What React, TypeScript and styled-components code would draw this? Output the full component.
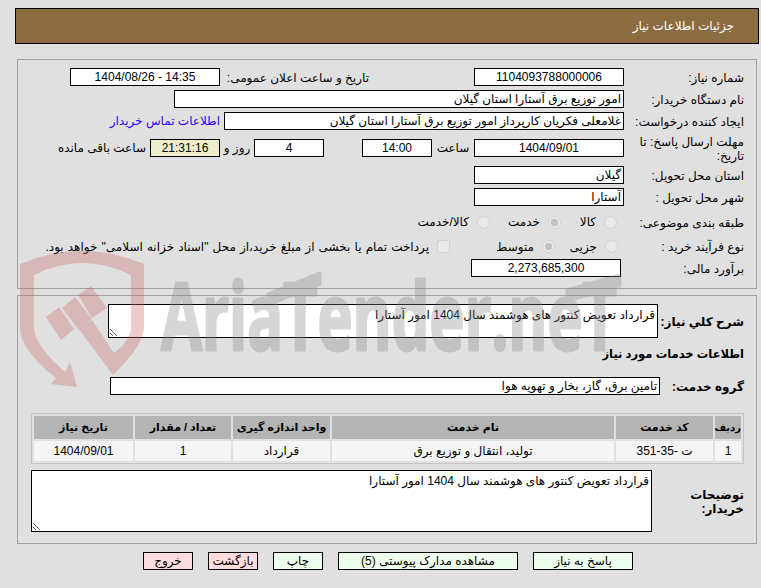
import React from "react";
import styled, { createGlobalStyle } from "styled-components";

const Global = createGlobalStyle`
  html, body { margin: 0; padding: 0; background: #e0e0e0; }
  body { font-family: "Liberation Sans", "DejaVu Sans", sans-serif; font-size: 12px; color: #000; }
`;
const Page = styled.div`
  position: relative;
  width: 761px;
  height: 588px;
  overflow: hidden;
  padding: 8px 2px 0 15px;
  box-sizing: border-box;
  direction: rtl;
`;
const Header = styled.div`
  height: 36px;
  box-sizing: border-box;
  border: 1px solid #000;
  background: #8c6d42;
  color: #fff;
  display: flex;
  align-items: center;
  padding-right: 24px;
`;
const Panel = styled.section<{ $h: number; $top: number }>`
  height: ${(p) => p.$h}px;
  margin: ${(p) => p.$top}px 2px 0 2px;
  box-sizing: border-box;
  border: 1px solid #a0a0a0;
  padding: 8px 12px 0 0;
`;
const Row = styled.div<{ $h?: number; $mt?: number }>`
  display: flex;
  align-items: center;
  height: ${(p) => p.$h ?? 18}px;
  margin-top: ${(p) => p.$mt ?? 4}px;
`;
const Label = styled.div<{ $w?: number; $bold?: boolean; $mr?: number }>`
  flex: none;
  box-sizing: border-box;
  width: ${(p) => p.$w ?? 120}px;
  margin-right: ${(p) => p.$mr ?? 0}px;
  padding-top: 1px;
  font-weight: ${(p) => (p.$bold ? 700 : 400)};
  line-height: 14px;
`;
const Heading = styled(Label)`
  font-size: 11.5px;
`;
const Field = styled.div<{ $w: number; $center?: boolean; $mr?: number; $bg?: string }>`
  flex: none;
  width: ${(p) => p.$w}px;
  height: 18px;
  margin-right: ${(p) => p.$mr ?? 0}px;
  box-sizing: border-box;
  border: 1px solid #000;
  background: ${(p) => p.$bg ?? "#fff"};
  padding: 0 2px;
  line-height: 16px;
  white-space: nowrap;
  overflow: hidden;
  text-align: ${(p) => (p.$center ? "center" : "right")};
`;
const ContactLink = styled.a`
  margin-right: 4px;
  color: #3300ff;
  white-space: nowrap;
`;
const Unit = styled.div<{ $w: number }>`
  flex: none;
  width: ${(p) => p.$w}px;
  text-align: center;
  white-space: nowrap;
`;
const Note = styled.div<{ $mr?: number }>`
  margin-right: ${(p) => p.$mr ?? 0}px;
  white-space: nowrap;
`;
const Choice = styled.label<{ $w: number; $mr?: number }>`
  flex: none;
  display: flex;
  align-items: center;
  gap: 8px;
  box-sizing: border-box;
  width: ${(p) => p.$w}px;
  padding-right: ${(p) => p.$mr ?? 0}px;
  white-space: nowrap;
`;
const Terms = styled.span`
  word-spacing: 0.8px;
`;
const Radio = styled.input.attrs({ type: "radio", disabled: true })`
  appearance: none;
  flex: none;
  width: 13px;
  height: 13px;
  margin: 0;
  border: 1px solid #d2d2d2;
  border-radius: 50%;
  background: #e9e9e9;
  box-sizing: border-box;
  &:checked { background: radial-gradient(circle, #c4c4c4 0 3.5px, #e9e9e9 4px); }
`;
const Check = styled.input.attrs({ type: "checkbox", disabled: true })`
  appearance: none;
  flex: none;
  width: 13px;
  height: 13px;
  margin: 0;
  border: 1px solid #d2d2d2;
  border-radius: 2px;
  background: #e9e9e9;
  box-sizing: border-box;
`;
const Area = styled.textarea<{ $w: number; $h: number }>`
  flex: none;
  display: block;
  width: ${(p) => p.$w}px;
  height: ${(p) => p.$h}px;
  box-sizing: border-box;
  margin: 0;
  border: 1px solid #000;
  border-radius: 0;
  outline: none;
  padding: 3px 2px;
  background: #fff;
  color: #000;
  font: inherit;
  direction: rtl;
`;
const Table = styled.table`
  table-layout: fixed;
  width: 713px;
  margin-top: 18px;
  border: 1px solid #c4c4c4;
  border-spacing: 2px;
  box-sizing: border-box;
`;
const Th = styled.th<{ $w: number; $fs?: number }>`
  width: ${(p) => p.$w}px;
  height: 23px;
  padding: 0;
  background: #b4b4b4;
  font-size: ${(p) => p.$fs ?? 11}px;
  font-weight: 700;
  text-align: center;
  white-space: nowrap;
`;
const Td = styled.td`
  height: 20px;
  padding: 0;
  background: #f5f5f5;
  text-align: center;
`;
const Buttons = styled.div`
  display: flex;
  gap: 15px;
  margin: 8px 126px 0 0;
`;
const Btn = styled.button<{ $w: number; $red?: boolean }>`
  flex: none;
  width: ${(p) => p.$w}px;
  height: 18px;
  padding: 0;
  box-sizing: border-box;
  border: 1px solid #000;
  background: ${(p) => (p.$red ? "#ffdddd" : "#eeffee")};
  color: #000;
  font: inherit;
  line-height: 16px;
`;
const Watermark = styled.svg`
  position: absolute;
  left: 0;
  top: 0;
  pointer-events: none;
  opacity: 0.32;
`;
const LogoText = styled.text`
  direction: ltr;
  unicode-bidi: bidi-override;
  font-family: "Open Sans", sans-serif;
  font-weight: 700;
  font-size: 94px;
`;

const DESC = "قرارداد تعویض کنتور های هوشمند سال 1404 امور آستارا";

export default function App() {
  return (
    <Page>
      <Global />
      <Header>جزئیات اطلاعات نیاز</Header>
      <Panel $h={230} $top={15}>
        <Row $mt={0}>
          <Label>شماره نیاز:</Label>
          <Field $w={150} $center>1104093788000006</Field>
          <Label $w={149} $mr={105}>تاریخ و ساعت اعلان عمومی:</Label>
          <Field $w={150} $center>14:35 - 1404/08/26</Field>
        </Row>
        <Row>
          <Label>نام دستگاه خریدار:</Label>
          <Field $w={450}>امور توزیع برق آستارا استان گیلان</Field>
        </Row>
        <Row>
          <Label>ایجاد کننده درخواست:</Label>
          <Field $w={400}>غلامعلی فکریان کارپرداز امور توزیع برق آستارا استان گیلان</Field>
          <ContactLink>اطلاعات تماس خریدار</ContactLink>
        </Row>
        <Row $h={28}>
          <Label>مهلت ارسال پاسخ: تا تاریخ:</Label>
          <Field $w={150} $center>1404/09/01</Field>
          <Unit $w={42}>ساعت</Unit>
          <Field $w={70} $center>14:00</Field>
          <Field $w={70} $center $mr={38}>4</Field>
          <Unit $w={34}>روز و</Unit>
          <Field $w={70} $center $bg="#eeeecc">21:31:16</Field>
          <Note $mr={4}>ساعت باقی مانده</Note>
        </Row>
        <Row>
          <Label>استان محل تحویل:</Label>
          <Field $w={150}>گیلان</Field>
        </Row>
        <Row>
          <Label>شهر محل تحویل :</Label>
          <Field $w={150}>آستارا</Field>
        </Row>
        <Row $h={24}>
          <Label>طبقه بندی موضوعی:</Label>
          <Choice $w={63} $mr={7}><Radio />کالا</Choice>
          <Choice $w={71}><Radio defaultChecked />خدمت</Choice>
          <Choice $w={80}><Radio />کالا/خدمت</Choice>
        </Row>
        <Row $h={17}>
          <Label>نوع فرآیند خرید :</Label>
          <Choice $w={69} $mr={6}><Radio />جزیی</Choice>
          <Choice $w={105}><Radio defaultChecked />متوسط</Choice>
          <Choice $w={410}><Check /><Terms>پرداخت تمام یا بخشی از مبلغ خرید،از محل "اسناد خزانه اسلامی" خواهد بود.</Terms></Choice>
        </Row>
        <Row>
          <Label>برآورد مالی:</Label>
          <Field $w={150} $center $mr={3}>2,273,685,300</Field>
        </Row>
      </Panel>
      <Panel $h={249} $top={6}>
        <Row $h={34} $mt={0}>
          <Label $w={86} $bold>شرح کلي نیاز:</Label>
          <Area $w={550} $h={34} readOnly value={DESC} />
        </Row>
        <Row $mt={6}>
          <Heading $w={300} $bold>اطلاعات خدمات مورد نیاز</Heading>
        </Row>
        <Row $mt={15}>
          <Label $w={84} $bold>گروه خدمت:</Label>
          <Field $w={550}>تامین برق، گاز، بخار و تهویه هوا</Field>
        </Row>
        <Table>
          <thead>
            <tr>
              <Th $w={26} $fs={10}>ردیف</Th>
              <Th $w={97}>کد خدمت</Th>
              <Th $w={282}>نام خدمت</Th>
              <Th $w={97}>واحد اندازه گیری</Th>
              <Th $w={96}>تعداد / مقدار</Th>
              <Th $w={99}>تاریخ نیاز</Th>
            </tr>
          </thead>
          <tbody>
            <tr>
              <Td>1</Td>
              <Td>ت -35-351</Td>
              <Td>تولید، انتقال و توزیع برق</Td>
              <Td>قرارداد</Td>
              <Td>1</Td>
              <Td>1404/09/01</Td>
            </tr>
          </tbody>
        </Table>
        <Row $h={62} $mt={6}>
          <Label $w={92} $bold>توضیحات خریدار:</Label>
          <Area $w={621} $h={62} readOnly value={DESC} />
        </Row>
      </Panel>
      <Buttons>
        <Btn $w={100}>پاسخ به نیاز</Btn>
        <Btn $w={180}>مشاهده مدارک پیوستی (5)</Btn>
        <Btn $w={50}>چاپ</Btn>
        <Btn $w={50} $red>بازگشت</Btn>
        <Btn $w={50} $red>خروج</Btn>
      </Buttons>
      <Watermark width="761" height="588" viewBox="0 0 761 588" aria-hidden="true">
        <g fill="#c86464">
          <path d="M20 264 Q82 238 144 264 L144 327 Q144 345 113 375 L78 328 L92 320 L114 353 Q131 340 131 327 L131 275 Q82 251 34 275 L34 327 Q34 345 65 372 L70 362 L77 387 L51 384 L56 378 Q20 350 20 327 Z" />
          <path d="M46 317 L59 307 L74 329 L61 340 Z" />
          <path d="M62 308 L75 297 L92 319 L78 329 Z" />
          <path d="M78 295 L91 286 L107 308 L92 318 Z" />
        </g>
        <g fill="#868686" stroke="#868686" strokeWidth="3" strokeLinejoin="round">
          <LogoText x="161" y="350" textLength="456" lengthAdjust="spacingAndGlyphs">AriaTender.neT</LogoText>
          <path d="M268 294 L320 273 L320 284 L268 305 Z" />
          <path d="M567 290 L620 275 L620 286 L567 301 Z" />
        </g>
      </Watermark>
    </Page>
  );
}
